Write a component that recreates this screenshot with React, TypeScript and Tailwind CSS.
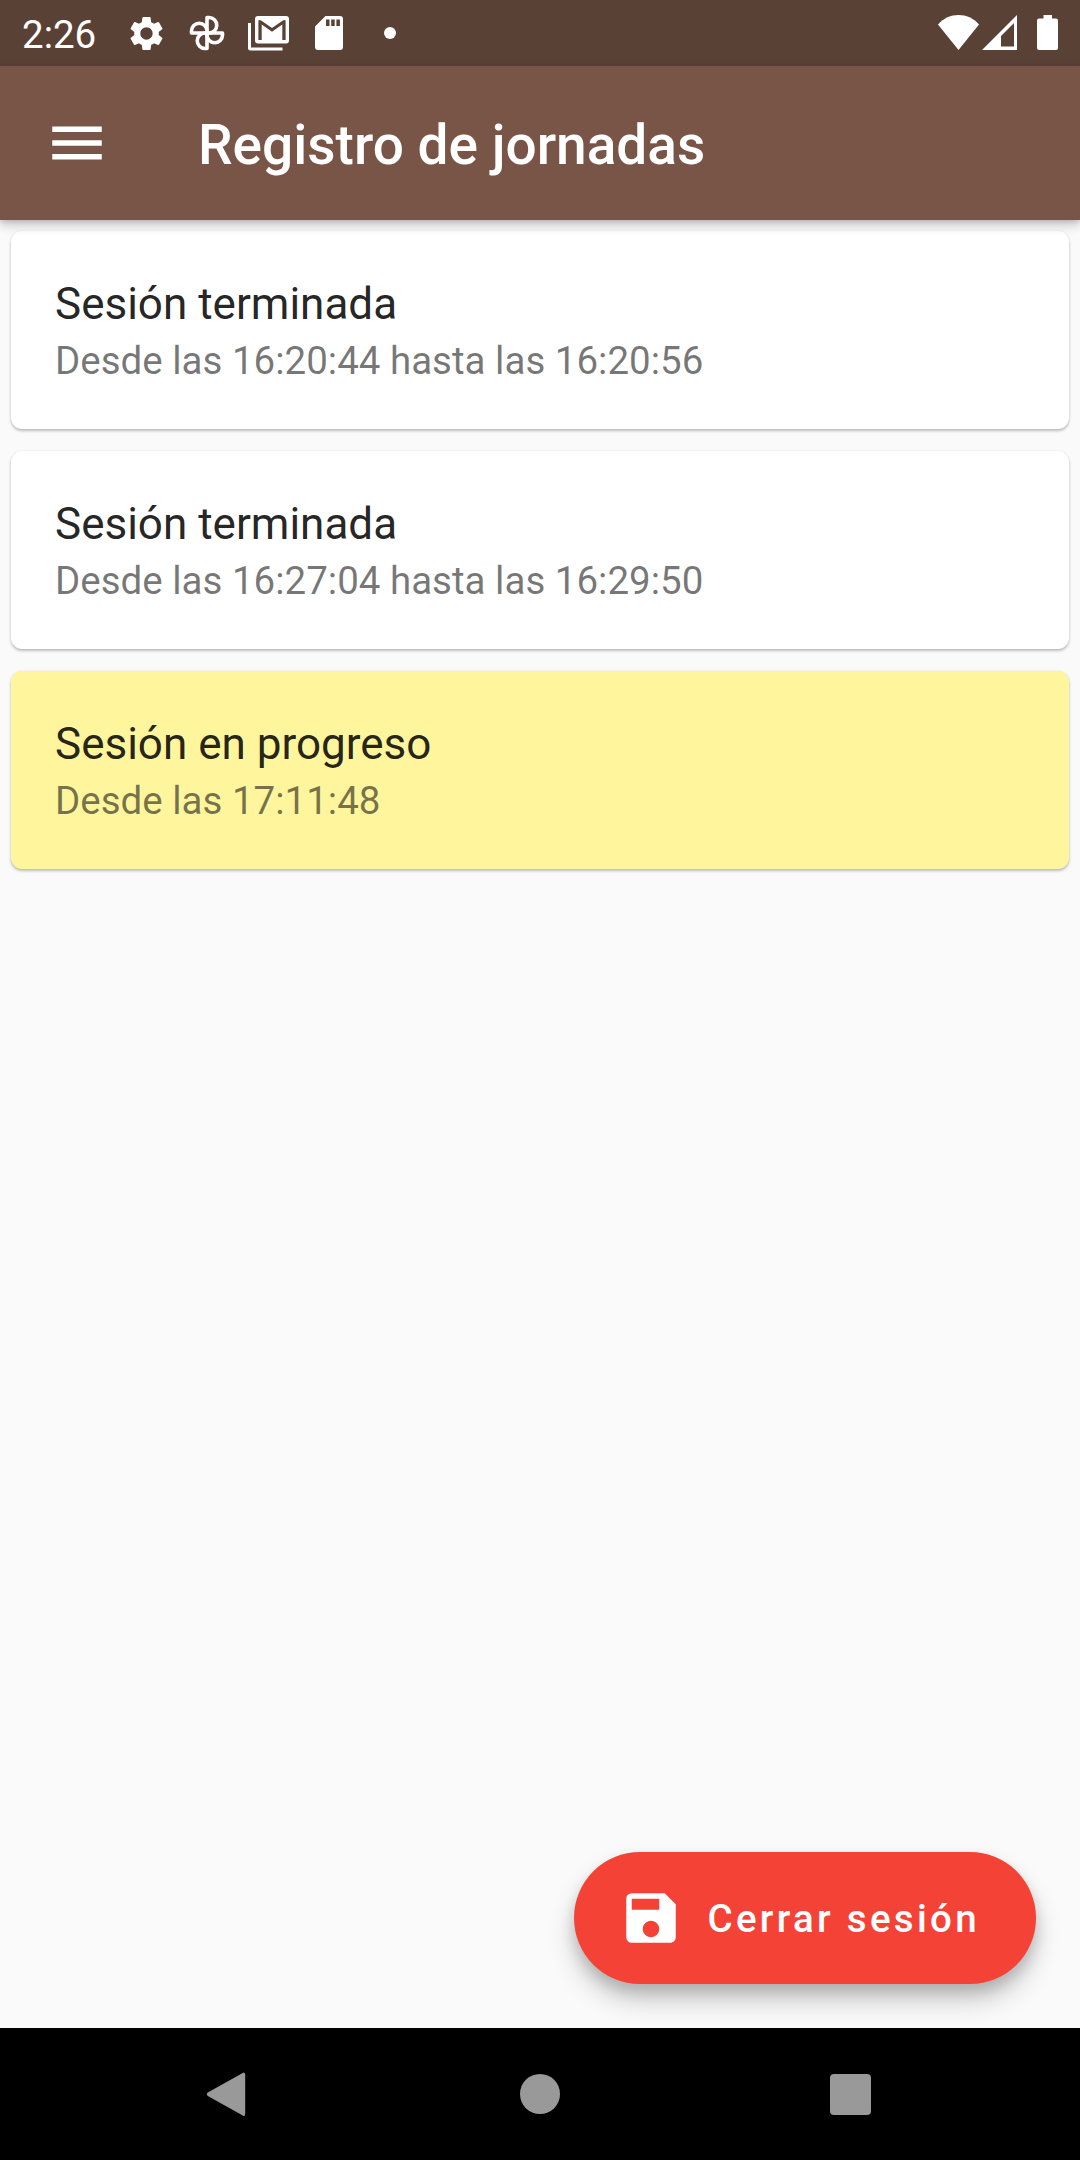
import React from 'react'
import { MdMenu, MdSave, MdSettings } from 'react-icons/md'

interface Session {
  id: number
  title: string
  detail: string
  active: boolean
}

const SESSIONS: Session[] = [
  { id: 1, title: 'Sesión terminada', detail: 'Desde las 16:20:44 hasta las 16:20:56', active: false },
  { id: 2, title: 'Sesión terminada', detail: 'Desde las 16:27:04 hasta las 16:29:50', active: false },
  { id: 3, title: 'Sesión en progreso', detail: 'Desde las 17:11:48', active: true },
]

const PhotosIcon = (): React.JSX.Element => (
  <svg width="36" height="36" viewBox="0 0 36 36" fill="none" stroke="currentColor" strokeWidth="3.6" strokeLinejoin="round">
    <path d="M18 2.5h2a7.75 7.75 0 0 1 0 15.5h-2z" />
    <path d="M33.5 18v2a7.75 7.75 0 0 1-15.5 0v-2z" />
    <path d="M18 33.5h-2a7.75 7.75 0 0 1 0-15.5h2z" />
    <path d="M2.5 18v-2a7.75 7.75 0 0 1 15.5 0v2z" />
  </svg>
)

const MailIcon = (): React.JSX.Element => (
  <svg width="42" height="36" viewBox="0 0 42 36" fill="none">
    <path d="M1.5 8v25q0 1 1 1h32" stroke="currentColor" strokeWidth="3" />
    <rect x="7" y="1" width="34" height="27.5" rx="3" fill="currentColor" />
    <path d="M10.4 5.3h2.4L24 13l11.2-7.7h2.4V25h-3.3V9.5L24 16.8 13.7 9.500V25h-3.3z" fill="#5a4136" />
  </svg>
)

const SdCardIcon = (): React.JSX.Element => (
  <svg width="28" height="34" viewBox="0 0 28 34" fill="currentColor" fillRule="evenodd">
    <path d="M10.5 0H25a3 3 0 0 1 3 3v28a3 3 0 0 1-3 3H3a3 3 0 0 1-3-3V10.5zM11 3.5v6.5h3.5V3.5zM16.2 3.5v6.5h3.5V3.5zM21.4 3.5v6.5h3.5V3.5z" />
  </svg>
)

const StatusBar = (): React.JSX.Element => (
  <div className="flex h-[66px] items-center bg-[#5a4136] px-[22px] text-white">
    <span className="w-[104px] pt-[3px] text-[38.5px] leading-[66px]">2:26</span>
    <MdSettings className="size-[41px] shrink-0" />
    <div className="ml-[22px]">
      <PhotosIcon />
    </div>
    <div className="ml-[23px]">
      <MailIcon />
    </div>
    <div className="ml-[25px]">
      <SdCardIcon />
    </div>
    <div className="ml-[41px] size-3 rounded-full bg-white" />
    <div className="-mt-px ml-auto flex items-center">
      <svg width="41" height="35" viewBox="0 0 41 35" fill="currentColor">
        <path d="M20.5 35L0 9.5C5.500 3 13 0 20.5 0S35.500 3 41 9.5z" />
      </svg>
      <svg className="ml-[3px]" width="35" height="35" viewBox="0 0 35 35" fill="currentColor" fillRule="evenodd">
        <path d="M35 0v35H0zM32 8L19 21v10.5h13z" />
      </svg>
      <svg className="ml-5" width="21" height="35" viewBox="0 0 21 35" fill="currentColor">
        <path d="M6.5 0h8.500v3.500h4a2 2 0 0 1 2 2V33a2 2 0 0 1-2 2H2a2 2 0 0 1-2-2V5.500a2 2 0 0 1 2-2h4.500z" />
      </svg>
    </div>
  </div>
)

const AppBar = (): React.JSX.Element => (
  <header className="relative z-10 flex h-[154px] items-center bg-[#795548] pl-11 text-white shadow-[0_5px_11px_rgba(0,0,0,0.2),0_2px_5px_rgba(0,0,0,0.12)]">
    <button aria-label="Menú">
      <MdMenu className="size-[66px]" />
    </button>
    <h1 className="ml-[88px] pt-1 text-[55px] leading-[64px] font-medium">Registro de jornadas</h1>
  </header>
)

const SessionCard = ({ session }: { session: Session }): React.JSX.Element => (
  <li
    className={`flex h-[198px] flex-col rounded-[11px] px-11 pt-[47px] shadow-[0_2px_3px_rgba(0,0,0,0.24),0_0_3px_rgba(0,0,0,0.06)] ${
      session.active ? 'bg-[#fff59d]' : 'bg-white'
    }`}
  >
    <p className="text-[44px] leading-[52px] text-black/87">{session.title}</p>
    <p className="mt-2 text-[38.5px] leading-[45px] text-black/54">{session.detail}</p>
  </li>
)

const NavigationBar = (): React.JSX.Element => (
  <nav className="flex h-[132px] items-center bg-black pl-[206px] text-[#999]">
    <svg width="40" height="46" viewBox="0 0 40 46" fill="currentColor">
      <path d="M36.3 2.200Q39.200 0 39.200 4v38.500q0 4-2.900 1.800L1.800 25q-2-1.700 0-3.400z" />
    </svg>
    <div className="ml-[274px] size-10 rounded-full bg-[#999]" />
    <div className="mt-px ml-[270px] size-[41px] rounded-[4px] bg-[#999]" />
  </nav>
)

const App = (): React.JSX.Element => {
  return (
    <div className="flex h-[2160px] w-[1080px] flex-col overflow-hidden bg-[#fafafa] font-[Roboto,sans-serif]">
      <StatusBar />
      <AppBar />
      <main className="flex flex-1 flex-col justify-between">
        <ul className="flex flex-col gap-[22px] p-[11px]">
          {SESSIONS.map((session) => (
            <SessionCard key={session.id} session={session} />
          ))}
        </ul>
        <button className="mr-11 mb-11 flex h-[132px] w-[462px] items-center self-end rounded-full bg-[#f44336] pl-11 text-white shadow-[0_16px_27px_rgba(0,0,0,0.2),0_8px_14px_rgba(0,0,0,0.14)]">
          <MdSave className="size-[66px]" />
          <span className="ml-[23.5px] pt-0.5 text-[38.5px] font-medium tracking-[3.3px] whitespace-nowrap">Cerrar sesión</span>
        </button>
      </main>
      <NavigationBar />
    </div>
  )
}

export default App
